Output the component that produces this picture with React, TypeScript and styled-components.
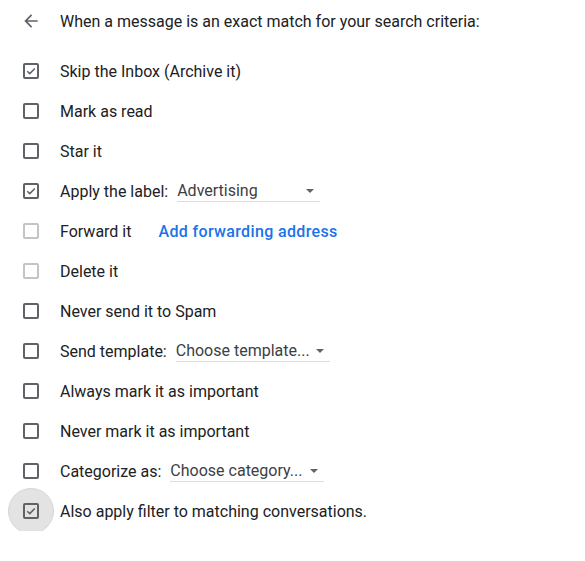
import React from 'react'
import styled, { createGlobalStyle } from 'styled-components'

const GlobalStyle = createGlobalStyle`
    body {
        margin: 0;
        background: #ffffff;
        font-family: Roboto, "Noto Sans", Arial, sans-serif;
        color: #202124;
    }
`

const Page = styled.div`
    display: flex;
    flex-direction: column;
    padding: 0 8px;
`

const Header = styled.div`
    display: flex;
    align-items: center;
    height: 42px;
    margin-bottom: 9px;
    font-size: 16px;
`

const Cell = styled.div<{ $focused?: boolean }>`
    width: 46px;
    height: 46px;
    flex: 0 0 46px;
    display: flex;
    align-items: center;
    justify-content: center;
    border-radius: 50%;
    margin-right: 6px;
    box-sizing: border-box;
    background: ${p => (p.$focused ? '#e3e3e3' : 'transparent')};
    border: 1px solid ${p => (p.$focused ? '#d6d6d6' : 'transparent')};
`

const Row = styled.div`
    display: flex;
    align-items: center;
    height: 40px;
    font-size: 16px;
`

const Box = styled.div<{ $disabled?: boolean }>`
    width: 16px;
    height: 16px;
    box-sizing: border-box;
    border: 2px solid ${p => (p.$disabled ? '#c4c4c4' : '#5f6368')};
    border-radius: 2px;
    display: flex;
    align-items: center;
    justify-content: center;
`

const Label = styled.span`
    white-space: nowrap;
`

const Link = styled.a`
    margin-left: 27px;
    color: #1a73e8;
    font-weight: 500;
    letter-spacing: 0.35px;
    text-decoration: none;
    white-space: nowrap;
    cursor: pointer;
`

const Select = styled.div<{ $width: number }>`
    display: flex;
    align-items: center;
    justify-content: space-between;
    width: ${p => p.$width}px;
    height: 22px;
    margin-left: 9px;
    box-sizing: border-box;
    border-bottom: 1px solid #dadce0;
    color: #3c4043;
    padding-right: 6px;
    white-space: nowrap;
`

const Caret = styled.span`
    width: 0;
    height: 0;
    border-left: 4.5px solid transparent;
    border-right: 4.5px solid transparent;
    border-top: 4.5px solid #5f6368;
    margin-top: 1px;
`

const Check = () => (
    <svg width="12" height="12" viewBox="0 0 12 12">
        <path d="M2.2 6.2 L4.8 8.6 L9.8 3.4" fill="none" stroke="#5f6368" strokeWidth="1.5" />
    </svg>
)

const Back = () => (
    <svg width="20" height="20" viewBox="0 0 24 24">
        <path d="M20 11H7.83l5.59-5.59L12 4l-8 8 8 8 1.41-1.41L7.83 13H20v-2z" fill="#5f6368" />
    </svg>
)

type Item = {
    label: string
    checked?: boolean
    disabled?: boolean
    focused?: boolean
    link?: string
    select?: { value: string, width: number }
}

const items: Item[] = [
    { label: 'Skip the Inbox (Archive it)', checked: true },
    { label: 'Mark as read' },
    { label: 'Star it' },
    { label: 'Apply the label:', checked: true, select: { value: 'Advertising', width: 143 } },
    { label: 'Forward it', disabled: true, link: 'Add forwarding address' },
    { label: 'Delete it', disabled: true },
    { label: 'Never send it to Spam' },
    { label: 'Send template:', select: { value: 'Choose template...', width: 154 } },
    { label: 'Always mark it as important' },
    { label: 'Never mark it as important' },
    { label: 'Categorize as:', select: { value: 'Choose category...', width: 154 } },
    { label: 'Also apply filter to matching conversations.', checked: true, focused: true },
]

const App: React.FC = () => {
    return (
        <>
            <GlobalStyle />
            <Page>
                <Header>
                    <Cell><Back /></Cell>
                    When a message is an exact match for your search criteria:
                </Header>
                {items.map(item => (
                    <Row key={item.label}>
                        <Cell $focused={item.focused}>
                            <Box $disabled={item.disabled}>{item.checked && <Check />}</Box>
                        </Cell>
                        <Label>{item.label}</Label>
                        {item.link && <Link>{item.link}</Link>}
                        {item.select && (
                            <Select $width={item.select.width}>
                                {item.select.value}
                                <Caret />
                            </Select>
                        )}
                    </Row>
                ))}
            </Page>
        </>
    )
}

export default App
